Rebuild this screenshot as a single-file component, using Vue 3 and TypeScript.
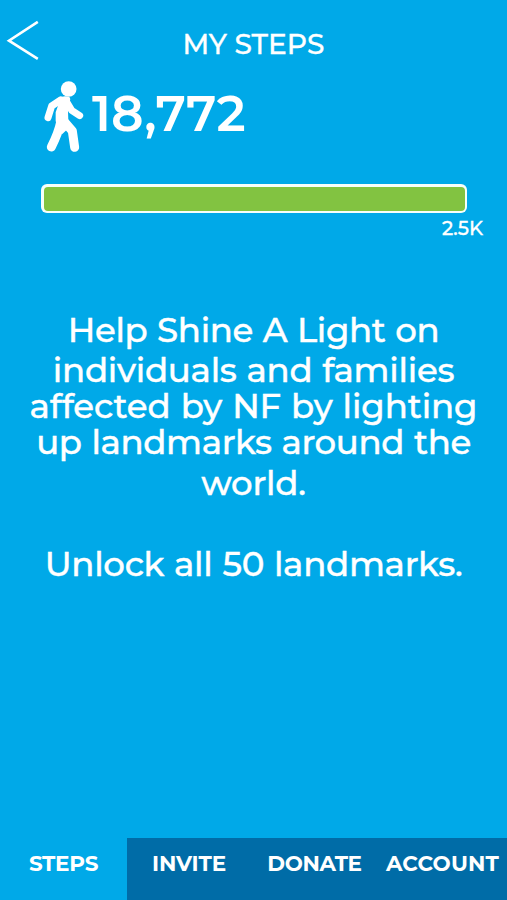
<script setup lang="ts">
import { ref } from 'vue'

interface Line {
  text: string
  height: number
  spacing: number
}

interface Tab {
  label: string
  spacing: number
}

const steps = 18772
const goal = 2500
const progress = Math.min(100, (steps / goal) * 100)

const lines: Line[] = [
  { text: 'Help Shine A Light on', height: 40, spacing: -0.38 },
  { text: 'individuals and families', height: 40, spacing: -0.28 },
  { text: 'affected by NF by lighting', height: 32, spacing: -0.12 },
  { text: 'up landmarks around the', height: 41, spacing: -0.36 },
  { text: 'world.', height: 41, spacing: -0.2 },
]
const unlock: Line = { text: 'Unlock all 50 landmarks.', height: 40, spacing: -0.28 }

const tabs: Tab[] = [
  { label: 'STEPS', spacing: -0.3 },
  { label: 'INVITE', spacing: -0.1 },
  { label: 'DONATE', spacing: -0.4 },
  { label: 'ACCOUNT', spacing: 0.2 },
]
const active = ref('STEPS')

const lineStyle = (l: Line) => ({
  lineHeight: `${l.height}px`,
  letterSpacing: `${l.spacing}px`,
})
</script>

<template>
  <div class="screen">
    <header class="header">
      <button class="back" aria-label="Back">
        <svg width="50" height="60" viewBox="0 0 50 60">
          <path d="M37.8 11.9 9 30.7 37.8 48.9" fill="none" stroke="#fff" stroke-width="2.6" />
        </svg>
      </button>
      <h1 class="title">MY STEPS</h1>
    </header>

    <section class="count">
      <svg class="walker" width="62" height="85" viewBox="0 0 186 255" fill="#fff" stroke="#fff" stroke-linecap="round" stroke-linejoin="round">
        <circle cx="116" cy="42" r="23.5" stroke="none" />
        <path d="M92 75 65 93 54 128" fill="none" stroke-width="21" />
        <path d="M112 84 125 106 149 122" fill="none" stroke-width="21" />
        <path d="M96 65Q108 62 119 67Q122 72 120 78L114 110 115 136 126 150 96 178 77 139V112L84 92 80 72Z" stroke="none" />
        <path d="M92 141Q86 172 64 216" fill="none" stroke-width="27" />
        <path d="M103 140 127 168 134 217" fill="none" stroke-width="27" />
      </svg>
      <span class="number">{{ steps.toLocaleString('en-US') }}</span>
    </section>

    <section class="progress">
      <div class="track">
        <div class="fill" :style="{ width: progress + '%' }"></div>
      </div>
      <span class="goal">{{ goal / 1000 }}K</span>
    </section>

    <main class="message">
      <p class="paragraph">
        <span v-for="l in lines" :key="l.text" class="line" :style="lineStyle(l)">{{ l.text }}</span>
      </p>
      <p class="paragraph">
        <span class="line" :style="lineStyle(unlock)">{{ unlock.text }}</span>
      </p>
    </main>

    <nav class="tabs">
      <button
        v-for="t in tabs"
        :key="t.label"
        class="tab"
        :class="{ active: active === t.label }"
        :style="{ letterSpacing: t.spacing + 'px' }"
        @click="active = t.label"
      >
        {{ t.label }}
      </button>
    </nav>
  </div>
</template>

<style>
body {
  margin: 0;
}
</style>

<style scoped>
.screen {
  display: flex;
  flex-direction: column;
  width: 507px;
  height: 900px;
  overflow: hidden;
  background: #00a9e8;
  color: #fff;
  font-family: Montserrat, Inter, sans-serif;
  font-weight: 500;
}
button {
  border: 0;
  padding: 0;
  background: none;
  color: inherit;
  font: inherit;
}
.header {
  display: grid;
  grid-template-columns: 50px 1fr 50px;
  height: 65px;
  padding-top: 10px;
}
.back {
  height: 60px;
}
.back svg {
  display: block;
}
.title {
  margin: 0;
  padding-top: 14px;
  font-size: 28px;
  font-weight: 500;
  line-height: 40px;
  text-align: center;
  -webkit-text-stroke: 0.3px #fff;
}
.count {
  display: flex;
  height: 85px;
  padding-left: 30px;
}
.walker {
  flex: none;
}
.number {
  font-size: 50px;
  font-weight: 600;
  line-height: 78px;
}
.progress {
  display: flex;
  flex-direction: column;
  padding: 24px 24px 0 41px;
}
.track {
  box-sizing: border-box;
  width: 426px;
  height: 29px;
  padding: 2.5px;
  border-radius: 6px;
  background: #f6fffa;
}
.fill {
  height: 100%;
  border-radius: 4px;
  background: #82c341;
}
.goal {
  align-self: flex-end;
  font-size: 19.5px;
  line-height: 30px;
  -webkit-text-stroke: 0.3px #fff;
}
.message {
  display: flex;
  flex-direction: column;
  gap: 40px;
  flex: 1;
  padding-top: 67px;
}
.paragraph {
  display: flex;
  flex-direction: column;
  margin: 0;
  font-size: 34px;
  text-align: center;
  white-space: nowrap;
  word-spacing: 1px;
  -webkit-text-stroke: 0.4px #fff;
}
.tabs {
  display: grid;
  grid-template-columns: 127px 124px 127px 129px;
  height: 62px;
  background: #006ca7;
}
.tab {
  padding-bottom: 12px;
  font-size: 21.5px;
  font-weight: 700;
  text-align: center;
}
.tab.active {
  background: #00a9e8;
}
</style>
